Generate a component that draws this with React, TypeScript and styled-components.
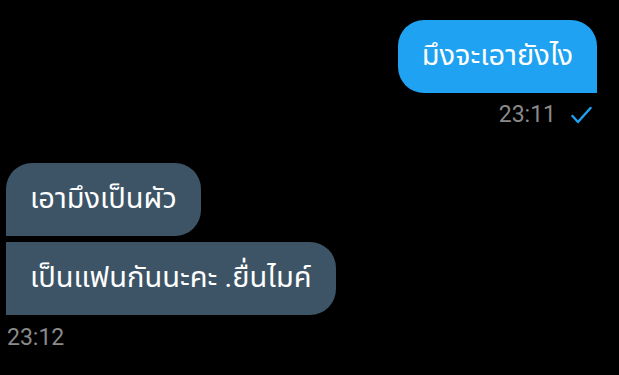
import React from 'react';
import styled, { createGlobalStyle } from 'styled-components';

const GlobalStyle = createGlobalStyle`
  html, body {
    margin: 0;
    padding: 0;
    background: #000000;
  }
  body {
    font-family: Roboto, "Noto Sans", "Noto Sans Thai", sans-serif;
  }
`;

const Screen = styled.div`
  width: 619px;
  height: 375px;
  overflow: hidden;
  background: #000000;
  display: flex;
  flex-direction: column;
  box-sizing: border-box;
  padding: 20px 22px 0 6px;
`;

type SideProps = {
  $out?: boolean;
};

const Group = styled.div<SideProps>`
  display: flex;
  flex-direction: column;
  align-items: ${({ $out }) => ($out ? 'flex-end' : 'flex-start')};
  gap: 6px;
  margin-bottom: ${({ $out }) => ($out ? '35px' : '0')};
`;

type BubbleProps = {
  $out?: boolean;
  $corners: string;
};

const Bubble = styled.div<BubbleProps>`
  box-sizing: border-box;
  height: 73px;
  padding: 0 24px 2px;
  display: flex;
  align-items: center;
  font-size: 29px;
  color: #ffffff;
  white-space: nowrap;
  border-radius: ${({ $corners }) => $corners};
  background: ${({ $out }) => ($out ? '#1fa2f1' : '#3c5466')};
`;

const Meta = styled.div<SideProps>`
  display: flex;
  align-items: center;
  gap: 15px;
  margin-top: ${({ $out }) => ($out ? '2px' : '3px')};
  padding-right: ${({ $out }) => ($out ? '5px' : '0')};
  padding-left: ${({ $out }) => ($out ? '0' : '1px')};
  font-family: Roboto, sans-serif;
  font-size: 23px;
  color: #8a8a8a;
`;

const Check = () => (
  <svg width="21" height="18" viewBox="0 0 21 18">
    <path d="M1.5 10 L7 16 L19.5 2" fill="none" stroke="#1fa2f1" strokeWidth="2.4" strokeLinecap="round" strokeLinejoin="round" />
  </svg>
);

const App = () => (
  <>
    <GlobalStyle />
    <Screen>
      <Group $out>
        <Bubble $out $corners="26px 26px 0 26px">มึงจะเอายังไง</Bubble>
        <Meta $out>
          <span>23:11</span>
          <Check />
        </Meta>
      </Group>
      <Group>
        <Bubble $corners="26px 26px 26px 0">เอามึงเป็นผัว</Bubble>
        <Bubble $corners="0 26px 26px 0">เป็นแฟนกันนะคะ .ยื่นไมค์</Bubble>
        <Meta>
          <span>23:12</span>
        </Meta>
      </Group>
    </Screen>
  </>
);

export default App;
